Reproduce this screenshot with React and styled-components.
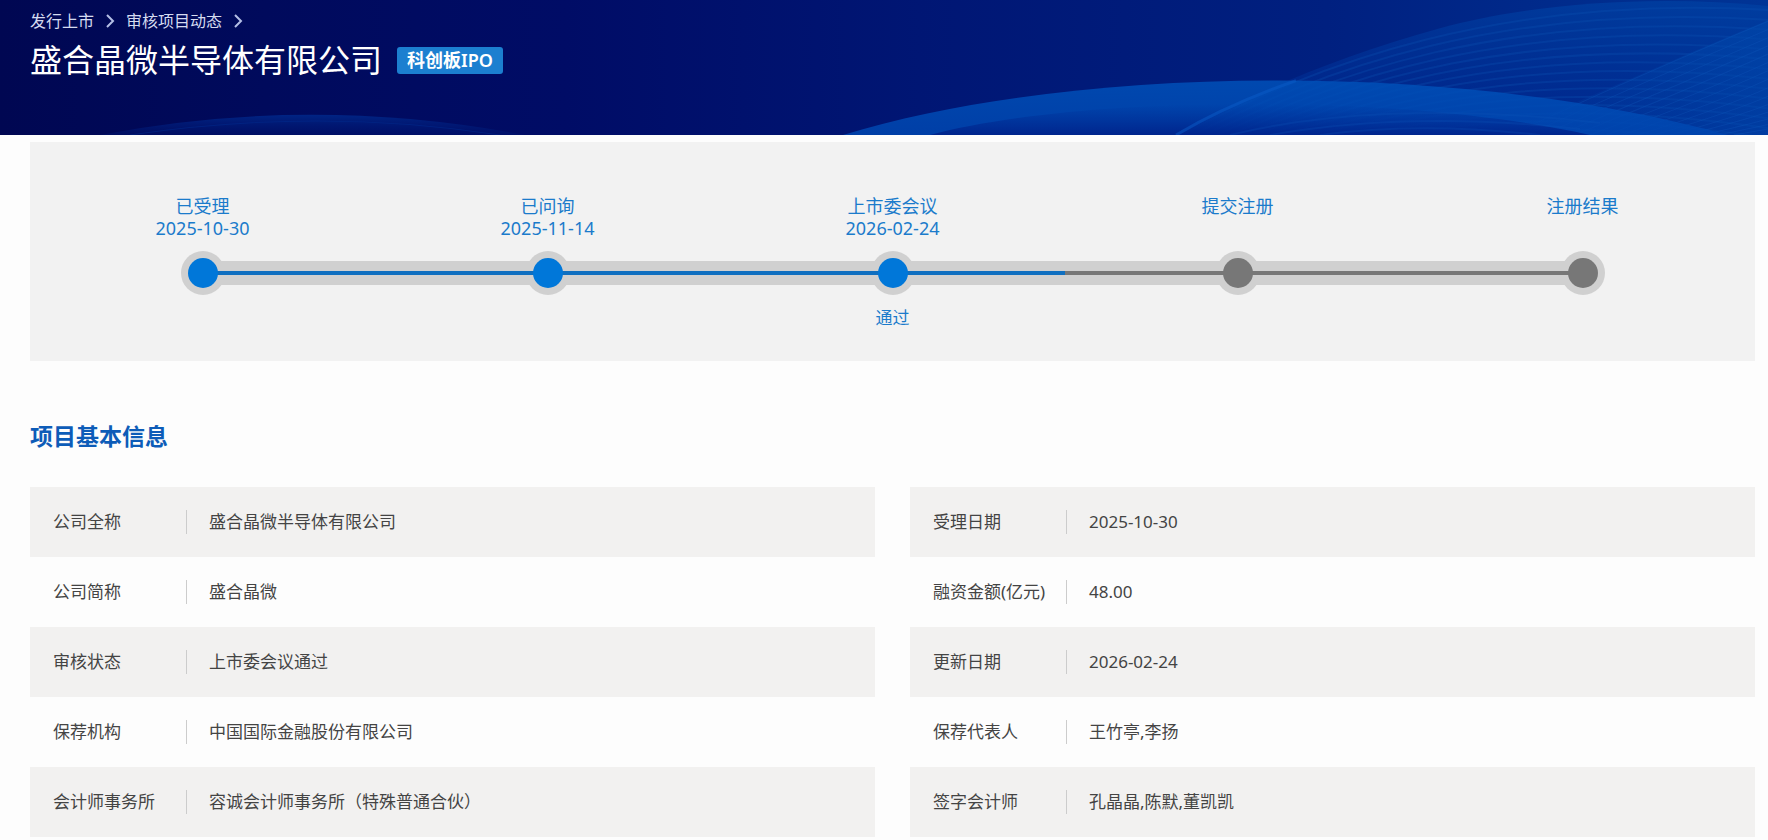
import React from 'react';
import styled, {createGlobalStyle} from 'styled-components';

const GlobalStyle = createGlobalStyle`
    * {
        box-sizing: border-box;
    }

    body {
        margin: 0;
        background-color: #fdfdfd;
        color: #444;
        font-family: "Noto Sans", "Noto Sans CJK SC", sans-serif;
        font-size: 17px;
    }
`;

const Banner = styled.header`
    position: relative;
    min-height: 135px;
    padding: 9px 30px;
    overflow: hidden;
    color: #fff;
    background: linear-gradient(90deg, #000752 0%, #000a5c 15%, #000c66 32%, #001674 52%, #002080 75%, #003496 100%);
`;

const BannerArt = styled.svg`
    position: absolute;
    top: 0;
    left: 0;
    width: 100%;
    height: 100%;
`;

const BannerContent = styled.div`
    position: relative;
`;

const Breadcrumb = styled.nav`
    display: flex;
    align-items: center;
    gap: 11px;
    height: 24px;
    font-size: 16px;
    line-height: 24px;
`;

const BreadcrumbLink = styled.a`
    color: #d5dbf0;
    text-decoration: none;
`;

const ChevronIcon = styled.svg`
    width: 10px;
    height: 14px;
    fill: none;
    stroke: #b4bfe6;
    stroke-width: 2;
`;

const TitleRow = styled.div`
    display: flex;
    align-items: center;
    gap: 15px;
    padding-top: 6px;
`;

const CompanyName = styled.h1`
    margin: 0;
    font-size: 32px;
    font-weight: 400;
    line-height: 42px;
`;

const Badge = styled.span`
    padding: 0 10px;
    border-radius: 3px;
    background-color: #1c7fd0;
    font-size: 18px;
    font-weight: 600;
    line-height: 27px;
`;

const Content = styled.main`
    padding: 7px 13px 5px 30px;
`;

const Timeline = styled.ol`
    display: grid;
    grid-template-columns: repeat(5, 1fr);
    margin: 0;
    padding: 53px 0 32px;
    list-style: none;
    background-color: #f2f2f2;
`;

const Step = styled.li`
    color: #1b7bcb;
    font-size: 18px;
    line-height: 22px;
    text-align: center;
`;

const StepLabel = styled.div`
    min-height: 44px;
`;

const StepDate = styled.time`
    display: block;
`;

const StepResult = styled.div`
    min-height: 22px;
    font-size: 17px;
`;

const Track = styled.div`
    display: grid;
    grid-template-columns: 1fr 1fr;
    align-items: center;
    margin: 12px 0;
`;

const Ring = styled.span`
    grid-area: 1 / 1 / 2 / 3;
    justify-self: center;
    width: 44px;
    height: 44px;
    border-radius: 50%;
    background-color: #d0d0d0;
`;

const Segment = styled.span`
    display: flex;
    align-items: center;
    grid-row: 1;
    grid-column: ${({side}) => (side === 'left' ? 1 : 2)};
    height: 24px;
    background-color: #d0d0d0;

    &::before {
        content: "";
        flex: 1;
        height: 4px;
        background-color: ${({done}) => (done ? '#0f6fc0' : '#777')};
    }
`;

const Dot = styled.span`
    z-index: 1;
    grid-area: 1 / 1 / 2 / 3;
    justify-self: center;
    width: 30px;
    height: 30px;
    border-radius: 50%;
    background-color: ${({done}) => (done ? '#0077d9' : '#777')};
`;

const SectionTitle = styled.h2`
    margin: 60px 0 36px;
    color: #0d5cb8;
    font-size: 23px;
    font-weight: 700;
    line-height: 30px;
`;

const InfoColumns = styled.div`
    display: grid;
    grid-template-columns: 1fr 1fr;
    gap: 35px;
`;

const InfoTable = styled.table`
    width: 100%;
    border-collapse: collapse;
    line-height: 24px;
`;

const InfoRow = styled.tr`
    height: 70px;

    &:nth-child(odd) {
        background-color: #f2f1f0;
    }
`;

const InfoLabel = styled.th`
    width: 157px;
    padding: 0 0 0 23px;
    font-weight: 400;
    text-align: left;
    white-space: nowrap;
`;

const LabelText = styled.div`
    border-right: 1px solid #ccc;
`;

const InfoValue = styled.td`
    padding: 0 22px;
`;

const steps = [
    {name: '已受理', date: '2025-10-30', reached: true, passed: true},
    {name: '已问询', date: '2025-11-14', reached: true, passed: true},
    {name: '上市委会议', date: '2026-02-24', result: '通过', reached: true, passed: true},
    {name: '提交注册'},
    {name: '注册结果'},
];

const companyInfo = [
    ['公司全称', '盛合晶微半导体有限公司'],
    ['公司简称', '盛合晶微'],
    ['审核状态', '上市委会议通过'],
    ['保荐机构', '中国国际金融股份有限公司'],
    ['会计师事务所', '容诚会计师事务所（特殊普通合伙）'],
];

const projectInfo = [
    ['受理日期', '2025-10-30'],
    ['融资金额(亿元)', '48.00'],
    ['更新日期', '2026-02-24'],
    ['保荐代表人', '王竹亭,李扬'],
    ['签字会计师', '孔晶晶,陈默,董凯凯'],
];

const Chevron = () => (
    <ChevronIcon viewBox="0 0 10 14" aria-hidden="true">
        <path d="M2 1 L8 7 L2 13" />
    </ChevronIcon>
);

const BannerWaves = () => {
    const rings = Array.from({length: 15}, (_, i) => i);

    return (
        <BannerArt viewBox="0 0 1768 134" preserveAspectRatio="none" aria-hidden="true">
            <defs>
                <linearGradient id="dome" x1="0" y1="0" x2="0" y2="1">
                    <stop offset="0" stopColor="#0050b8" stopOpacity="0.85" />
                    <stop offset="1" stopColor="#0046b0" stopOpacity="0.85" />
                </linearGradient>
                <linearGradient id="hollow" x1="0" y1="0" x2="0" y2="1">
                    <stop offset="0" stopColor="#002a92" stopOpacity="0" />
                    <stop offset="1" stopColor="#002088" stopOpacity="0.85" />
                </linearGradient>
                <linearGradient id="wave" x1="0" y1="0" x2="0" y2="1">
                    <stop offset="0" stopColor="#0044a6" stopOpacity="0.6" />
                    <stop offset="1" stopColor="#00208c" stopOpacity="0.5" />
                </linearGradient>
                <linearGradient id="small" x1="0" y1="0" x2="0" y2="1">
                    <stop offset="0" stopColor="#002484" />
                    <stop offset="1" stopColor="#001672" stopOpacity="0.4" />
                </linearGradient>
                <linearGradient id="glow" x1="0" y1="0" x2="1" y2="0">
                    <stop offset="0" stopColor="#0048ac" stopOpacity="0" />
                    <stop offset="1" stopColor="#0048ac" stopOpacity="0.6" />
                </linearGradient>
            </defs>
            <path d="M100 134 Q 310 94 525 134 Z" fill="url(#small)" />
            <path d="M130 134 Q 320 106 500 134" fill="none" stroke="#002c8e" strokeOpacity="0.5" />
            <path
                d="M1176 134 C 1240 98 1330 58 1440 28 C 1530 4 1650 -6 1768 6 V 134 Z"
                fill="url(#wave)"
            />
            <g fill="none" stroke="#0a52b4" strokeOpacity="0.3" strokeWidth="2">
                {rings.map((i) => (
                    <path
                        key={i}
                        d={`M${1180 + i * 12} 134 C ${1310 + i * 6} ${68 + i * 6} 1500 ${-12 + i * 8} 1800 ${12 + i * 10}`}
                    />
                ))}
            </g>
            <path d="M1500 134 C 1590 96 1690 52 1768 20 V 134 Z" fill="url(#glow)" />
            <g fill="none" stroke="#1058bc" strokeOpacity="0.3" strokeWidth="1">
                {rings.map((i) => (
                    <path key={i} d={`M${1510 + i * 16} 134 Q ${1640 + i * 14} ${74 + i * 3} 1790 ${12 + i * 8}`} />
                ))}
            </g>
            <path d="M843 134 C 1080 62 1470 62 1728 134 Z" fill="url(#dome)" />
            <path d="M930 134 C 1080 94 1400 92 1590 134 Z" fill="url(#hollow)" />
            <g fill="none" stroke="#0a54b8" strokeOpacity="0.25" strokeWidth="2">
                <path d="M1230 134 C 1320 112 1450 104 1600 122" />
                <path d="M1270 134 C 1350 120 1450 114 1580 128" />
                <path d="M1320 134 C 1380 126 1450 124 1540 134" />
            </g>
            <path d="M1176 134 C 1210 114 1250 96 1296 80" fill="none" stroke="#0a5cc8" strokeOpacity="0.5" strokeWidth="3" />
        </BannerArt>
    );
};

const ProjectTimeline = () => (
    <Timeline>
        {steps.map((step, index) => (
            <Step key={step.name}>
                <StepLabel>
                    {step.name}
                    {step.date && <StepDate dateTime={step.date}>{step.date}</StepDate>}
                </StepLabel>
                <Track>
                    <Ring />
                    {index > 0 && <Segment side="left" done={step.reached} />}
                    {index < steps.length - 1 && <Segment side="right" done={step.passed} />}
                    <Dot done={step.reached} />
                </Track>
                <StepResult>{step.result}</StepResult>
            </Step>
        ))}
    </Timeline>
);

const Info = ({rows}) => (
    <InfoTable>
        <tbody>
            {rows.map(([label, value]) => (
                <InfoRow key={label}>
                    <InfoLabel scope="row">
                        <LabelText>{label}</LabelText>
                    </InfoLabel>
                    <InfoValue>{value}</InfoValue>
                </InfoRow>
            ))}
        </tbody>
    </InfoTable>
);

const App = () => {
    return (
        <>
            <GlobalStyle />
            <Banner>
                <BannerWaves />
                <BannerContent>
                    <Breadcrumb>
                        <BreadcrumbLink href="#listing">发行上市</BreadcrumbLink>
                        <Chevron />
                        <BreadcrumbLink href="#projects">审核项目动态</BreadcrumbLink>
                        <Chevron />
                    </Breadcrumb>
                    <TitleRow>
                        <CompanyName>盛合晶微半导体有限公司</CompanyName>
                        <Badge>科创板IPO</Badge>
                    </TitleRow>
                </BannerContent>
            </Banner>
            <Content>
                <ProjectTimeline />
                <SectionTitle>项目基本信息</SectionTitle>
                <InfoColumns>
                    <Info rows={companyInfo} />
                    <Info rows={projectInfo} />
                </InfoColumns>
            </Content>
        </>
    );
};

export default App;
